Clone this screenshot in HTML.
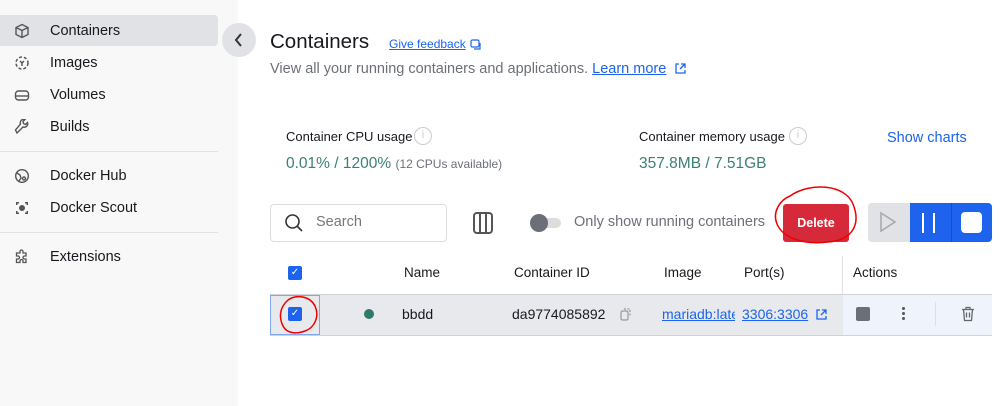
<!DOCTYPE html>
<html><head><style>
*{box-sizing:border-box;margin:0;padding:0}
body{width:1005px;height:406px;overflow:hidden;background:#fff;font-family:"Liberation Sans",sans-serif;color:#17191e;position:relative}
.sb{position:absolute;left:0;top:0;width:238px;height:406px;background:#f8f8f8}
.it{position:absolute;left:0;width:218px;height:31px;font-size:14.5px;line-height:32px;padding-left:50px}
.it svg{position:absolute;left:14px;top:8px}
.sel{background:#e1e2e6;border-radius:0 4px 4px 0}
.hr{position:absolute;left:0;width:218px;height:1px;background:#e1e2e6}
.a{position:absolute;white-space:nowrap}
.lnk{color:#1d63ed;text-decoration:underline}
</style></head><body>
<div class="sb">
<div class="it sel" style="top:15px"><svg width="16" height="16" viewBox="0 0 16 16" fill="none" stroke="#555" stroke-width="1.4"><path d="M8 1.5l6 3v7l-6 3-6-3v-7z M2 4.5l6 3 6-3 M8 7.5v7"/></svg>Containers</div>
<div class="it" style="top:47px"><svg width="16" height="16" viewBox="0 0 16 16" fill="none" stroke="#555" stroke-width="1.5" stroke-dasharray="3 2"><circle cx="8" cy="8" r="6"/><path d="M6 6l2 2 2-2M8 8v3" stroke-dasharray="none"/></svg>Images</div>
<div class="it" style="top:79px"><svg width="16" height="16" viewBox="0 0 16 16" fill="none" stroke="#555" stroke-width="1.4"><rect x="1.5" y="4" width="13" height="9" rx="3"/><path d="M1.5 9h13"/></svg>Volumes</div>
<div class="it" style="top:111px"><svg width="16" height="16" viewBox="0 0 16 16" fill="none" stroke="#555" stroke-width="1.4"><path d="M3 14l6-6a3.5 3.5 0 0 0 4.5-4.5l-2 2-2-1-.5-2 2-2A3.5 3.5 0 0 0 6.5 5L1.5 11z"/></svg>Builds</div>
<div class="hr" style="top:151px"></div>
<div class="it" style="top:160px"><svg width="16" height="16" viewBox="0 0 16 16" fill="none" stroke="#555" stroke-width="1.4"><circle cx="8" cy="8" r="6.3"/><circle cx="10" cy="10.5" r="1.5"/><path d="M3 5l3 2 1 3-2 3"/></svg>Docker Hub</div>
<div class="it" style="top:192px"><svg width="16" height="16" viewBox="0 0 16 16" fill="#555"><circle cx="8" cy="8" r="3"/><path d="M2 2h3v1.5H3.5V5H2zM14 2h-3v1.5h1.5V5H14zM2 14h3v-1.5H3.5V11H2zM14 14h-3v-1.5h1.5V11H14z"/></svg>Docker Scout</div>
<div class="hr" style="top:232px"></div>
<div class="it" style="top:241px"><svg width="16" height="16" viewBox="0 0 16 16" fill="none" stroke="#555" stroke-width="1.3"><path d="M6 2.5a1.5 1.5 0 0 1 3 0V4h3v3h-1.5a1.5 1.5 0 0 0 0 3H12v3.5H9V12a1.5 1.5 0 0 0-3 0v1.5H2.5V10H4a1.5 1.5 0 0 0 0-3H2.5V4H6z"/></svg>Extensions</div>
</div>
<div class="a" style="left:222px;top:23px;width:34px;height:34px;border-radius:50%;background:#e1e2e6"></div>
<svg class="a" style="left:232px;top:32px" width="14" height="16" viewBox="0 0 14 16"><path d="M9 2L4 8l5 6" fill="none" stroke="#333" stroke-width="2"/></svg>

<div class="a" style="left:270px;top:30px;font-size:20.5px;font-weight:500">Containers</div>
<div class="a lnk" style="left:389px;top:37px;font-size:12px">Give feedback</div>
<svg class="a" style="left:470px;top:39px" width="12" height="12" viewBox="0 0 12 12" fill="none" stroke="#1d63ed" stroke-width="1.2"><rect x="1" y="1" width="8" height="7" rx="1.5"/><path d="M4 10h6V4"/></svg>
<div class="a" style="left:270px;top:61px;font-size:14.5px;color:#6c6f78">View all your running containers and applications. <span class="lnk">Learn more</span></div>
<svg class="a" style="left:674px;top:62px" width="13" height="13" viewBox="0 0 13 13" fill="none" stroke="#1d63ed" stroke-width="1.3"><path d="M5 2H2v9h9V8M7 2h4v4M11 2L6 7"/></svg>

<div class="a" style="left:286px;top:129px;font-size:13px">Container CPU usage</div>
<div class="a" style="left:414px;top:127px;width:18px;height:18px;border:1.5px solid #ccc;border-radius:50%;font-size:11px;color:#ccc;text-align:center;line-height:15px">i</div>
<div class="a" style="left:286px;top:155px;font-size:15.5px;color:#3b7f75">0.01% / 1200% <span style="font-size:12px;color:#6c6f78">(12 CPUs available)</span></div>
<div class="a" style="left:639px;top:129px;font-size:13px">Container memory usage</div>
<div class="a" style="left:789px;top:127px;width:18px;height:18px;border:1.5px solid #ccc;border-radius:50%;font-size:11px;color:#ccc;text-align:center;line-height:15px">i</div>
<div class="a" style="left:639px;top:155px;font-size:15.5px;color:#3b7f75">357.8MB / 7.51GB</div>
<div class="a" style="left:887px;top:130px;font-size:14.5px;color:#1d63ed;font-weight:500">Show charts</div>

<div class="a" style="left:270px;top:204px;width:177px;height:38px;border:1px solid #ddd;border-radius:4px"></div>
<svg class="a" style="left:284px;top:213px" width="20" height="20" viewBox="0 0 20 20" fill="none" stroke="#333" stroke-width="1.6"><circle cx="8.5" cy="8.5" r="6.5"/><path d="M13.5 13.5L18 18"/></svg>
<div class="a" style="left:316px;top:214px;font-size:14.5px;color:#777">Search</div>
<div class="a" style="left:473px;top:212px;width:20px;height:22px;border:2px solid #555;border-radius:4px"></div>
<div class="a" style="left:479px;top:213px;width:2px;height:20px;background:#555"></div>
<div class="a" style="left:485px;top:213px;width:2px;height:20px;background:#555"></div>
<div class="a" style="left:531px;top:218px;width:30px;height:10px;border-radius:5px;background:#ddd"></div>
<div class="a" style="left:530px;top:214px;width:18px;height:18px;border-radius:50%;background:#6c6f78"></div>
<div class="a" style="left:574px;top:214px;font-size:14.5px;color:#6c6f78">Only show running containers</div>
<div class="a" style="left:783px;top:204px;width:66px;height:38px;background:#d6293a;border-radius:3px;color:#fff;font-size:12.5px;font-weight:bold;text-align:center;line-height:38px">Delete</div>
<div class="a" style="left:868px;top:203px;width:42px;height:39px;background:#e1e2e6;border-radius:4px 0 0 4px"></div>
<svg class="a" style="left:878px;top:211px" width="20" height="22" viewBox="0 0 20 22"><path d="M3 2l14 9-14 9z" fill="none" stroke="#aaa" stroke-width="1.6"/></svg>
<div class="a" style="left:910px;top:203px;width:82px;height:39px;background:#1d63ed;border-radius:0 4px 4px 0"></div>
<div class="a" style="left:951px;top:203px;width:1px;height:39px;background:#1550c0"></div>
<div class="a" style="left:922px;top:213px;width:2px;height:20px;background:#fff"></div>
<div class="a" style="left:933px;top:213px;width:2px;height:20px;background:#fff"></div>
<div class="a" style="left:961px;top:212px;width:21px;height:21px;background:#fff;border-radius:4px"></div>

<div class="a" style="left:842px;top:256px;width:1px;height:40px;background:#e1e2e6"></div>
<div class="a" style="left:288px;top:266px;width:14px;height:14px;background:#1d63ed;border-radius:2px;color:#fff;font-size:10px;text-align:center;line-height:14px">✓</div>
<div class="a" style="left:404px;top:265px;font-size:13.5px;font-weight:500">Name</div>
<div class="a" style="left:514px;top:265px;font-size:13.5px;font-weight:500">Container ID</div>
<div class="a" style="left:664px;top:265px;font-size:13.5px;font-weight:500">Image</div>
<div class="a" style="left:744px;top:265px;font-size:13.5px;font-weight:500">Port(s)</div>
<div class="a" style="left:853px;top:265px;font-size:13.5px;font-weight:500">Actions</div>

<div class="a" style="left:270px;top:294px;width:722px;height:1px;background:#d0d2d8"></div>
<div class="a" style="left:270px;top:295px;width:573px;height:40px;background:#e8e9ed"></div>
<div class="a" style="left:843px;top:295px;width:149px;height:40px;background:#eef3fc"></div>
<div class="a" style="left:270px;top:295px;width:50px;height:40px;border:1px solid #7fa6ef"></div>
<div class="a" style="left:288px;top:307px;width:14px;height:14px;background:#1d63ed;border-radius:2px;color:#fff;font-size:10px;text-align:center;line-height:14px">✓</div>
<div class="a" style="left:364px;top:309px;width:10px;height:10px;border-radius:50%;background:#2f7a6b"></div>
<div class="a" style="left:402px;top:306px;font-size:14px">bbdd</div>
<div class="a" style="left:512px;top:306px;font-size:14px">da9774085892</div>
<svg class="a" style="left:620px;top:307px" width="12" height="14" viewBox="0 0 12 14" fill="none" stroke="#999" stroke-width="1.2"><rect x="1" y="4" width="7" height="9" rx="1.5"/><path d="M4 2h6v8" stroke-dasharray="2 1.5"/></svg>
<div class="a lnk" style="left:662px;top:306px;font-size:14px;width:73px;overflow:hidden">mariadb:latest</div>
<div class="a lnk" style="left:742px;top:306px;font-size:14px">3306:3306</div>
<svg class="a" style="left:815px;top:308px" width="13" height="13" viewBox="0 0 13 13" fill="none" stroke="#1d63ed" stroke-width="1.3"><path d="M5 2H2v9h9V8M7 2h4v4M11 2L6 7"/></svg>
<div class="a" style="left:856px;top:307px;width:14px;height:14px;background:#6c6f78;border-radius:2px"></div>
<div class="a" style="left:902px;top:307px;width:3px;height:3px;background:#555;border-radius:50%;box-shadow:0 5px 0 #555,0 10px 0 #555"></div>
<div class="a" style="left:935px;top:302px;width:1px;height:24px;background:#dde"></div>
<svg class="a" style="left:961px;top:306px" width="14" height="16" viewBox="0 0 14 16" fill="none" stroke="#666" stroke-width="1.3"><path d="M1 3.5h12M5 3.5V1.5h4v2M2.5 3.5l1 11h7l1-11M5.5 6.5v5M8.5 6.5v5"/></svg>
<div class="a" style="left:270px;top:335px;width:722px;height:1px;background:#d0d2d8"></div>

<svg class="a" style="left:0;top:0" width="1005" height="406" fill="none" stroke="#e00" stroke-width="1.5">
<path d="M790 196c20-14 55-12 63 8 8 20 0 36-25 38-25 3-45-4-51-18-5-12 3-24 13-28"/>
<path d="M288 300c8-6 22-4 27 6 5 11-1 22-10 25-8 3-18 3-22-5-4-8-4-18 5-26"/>
</svg>
</body></html>
